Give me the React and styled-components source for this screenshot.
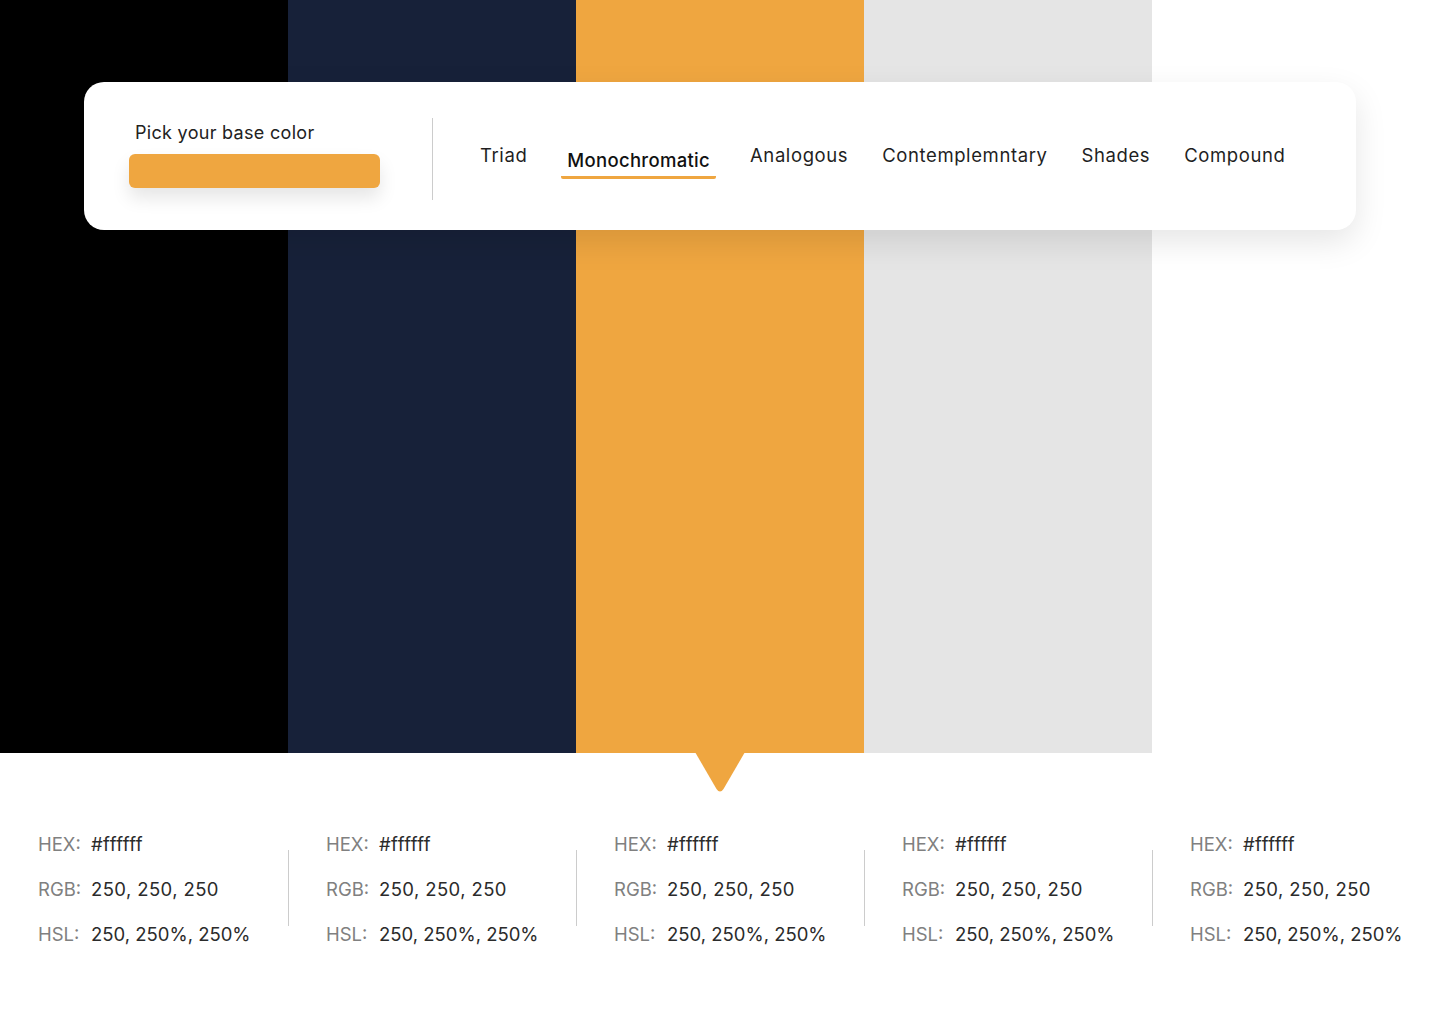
import styled, { createGlobalStyle } from "styled-components";

const GlobalStyle = createGlobalStyle`
  body {
    margin: 0;
    background: #ffffff;
    font-family: "Inter", "Noto Sans", sans-serif;
  }
`;

const swatches = ["#000000", "#172139", "#EFA640", "#E5E5E5", "#FFFFFF"];
const tabs = ["Triad", "Monochromatic", "Analogous", "Contemplemntary", "Shades", "Compound"];

const Page = styled.div`
  position: relative;
  width: 1440px;
  height: 1024px;
  overflow: hidden;
`;

const Swatches = styled.div`
  display: flex;
  height: 753px;
`;

const Swatch = styled.div`
  position: relative;
  flex: 0 0 288px;
  background: ${(p) => p.$color};
`;

const Pointer = styled.svg`
  position: absolute;
  left: 119px;
  top: 752px;
`;

const Card = styled.div`
  position: absolute;
  left: 84px;
  top: 82px;
  width: 1272px;
  height: 148px;
  box-sizing: border-box;
  padding: 36px 0 0 45px;
  display: flex;
  align-items: flex-start;
  background: #ffffff;
  border-radius: 20px;
  box-shadow: 0 12px 32px rgba(0, 0, 0, 0.1);
`;

const BasePicker = styled.div`
  display: flex;
  flex-direction: column;
  margin-top: 4px;
`;

const PickLabel = styled.div`
  padding-left: 6px;
  font-size: 18px;
  letter-spacing: 0.3px;
  line-height: 22px;
  color: #222222;
`;

const BaseInput = styled.div`
  margin-top: 10px;
  width: 251px;
  height: 34px;
  border-radius: 6px;
  background: #efa640;
  box-shadow: 0 10px 18px rgba(0, 0, 0, 0.1);
`;

const Divider = styled.div`
  width: 1px;
  height: 82px;
  margin: 0 47px 0 52px;
  background: #cccccc;
`;

const TabList = styled.div`
  display: flex;
  align-items: flex-start;
  gap: 34px;
  margin-top: 25px;
`;

const Tab = styled.div`
  font-size: 18.5px;
  letter-spacing: 0.6px;
  line-height: 24px;
  color: #1f1f1f;
  white-space: nowrap;
  ${(p) =>
    p.$active &&
    `
    margin-top: 5px;
    padding: 0 6px 4px;
    font-weight: 500;
    letter-spacing: 0.3px;
    color: #111111;
    border-bottom: 3px solid #efa640;
    border-radius: 0 0 2px 2px;
  `}
`;

const Info = styled.div`
  display: flex;
  padding-top: 79px;
`;

const InfoColumn = styled.div`
  position: relative;
  flex: 0 0 288px;
  box-sizing: border-box;
  padding-left: 38px;
  display: grid;
  grid-template-columns: 44px auto;
  column-gap: 9px;
  row-gap: 21px;
  font-size: 18.5px;
  line-height: 24px;

  ${(p) =>
    p.$divider &&
    `
    &::before {
      content: "";
      position: absolute;
      left: 0;
      top: 18px;
      width: 1px;
      height: 76px;
      background: #cccccc;
    }
  `}
`;

const Label = styled.span`
  color: #808080;
`;

const Value = styled.span`
  color: #2b2b2b;
  white-space: nowrap;
  letter-spacing: ${(p) => (p.$wide ? "0.4px" : "0")};
`;

export default function App() {
  return (
    <Page>
      <GlobalStyle />
      <Swatches>
        {swatches.map((c, i) => (
          <Swatch key={i} $color={c}>
            {i === 2 && (
              <Pointer width="50" height="40" viewBox="0 0 50 40">
                <path d="M0 0 H50 L28.5 37 Q25 42 21.5 37 Z" fill="#EFA640" />
              </Pointer>
            )}
          </Swatch>
        ))}
      </Swatches>

      <Card>
        <BasePicker>
          <PickLabel>Pick your base color</PickLabel>
          <BaseInput />
        </BasePicker>
        <Divider />
        <TabList>
          {tabs.map((t) => (
            <Tab key={t} $active={t === "Monochromatic"}>
              {t}
            </Tab>
          ))}
        </TabList>
      </Card>

      <Info>
        {swatches.map((c, i) => (
          <InfoColumn key={i} $divider={i > 0}>
            <Label>HEX:</Label>
            <Value $wide>#ffffff</Value>
            <Label>RGB:</Label>
            <Value $wide>250, 250, 250</Value>
            <Label>HSL:</Label>
            <Value>250, 250%, 250%</Value>
          </InfoColumn>
        ))}
      </Info>
    </Page>
  );
}
